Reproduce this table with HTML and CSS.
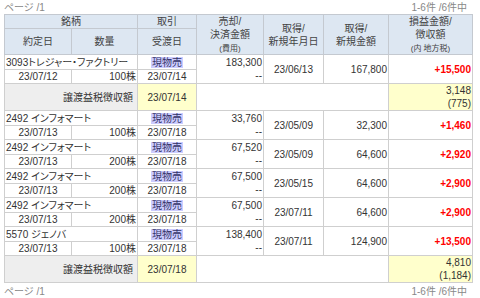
FILE: index.html
```html
<!DOCTYPE html>
<html lang="ja">
<head>
<meta charset="utf-8">
<link rel="stylesheet" href="styles.css">
</head>
<body>
<div class="page">
  <div class="pager"><span>ページ /1</span><span>1-6件 /6件中</span></div>
  <table class="list">
    <colgroup>
      <col class="c1"><col class="c2"><col class="c3"><col class="c4"><col class="c5"><col class="c6"><col class="c7">
    </colgroup>
    <thead>
      <tr class="h1">
        <th colspan="2">銘柄</th>
        <th>取引</th>
        <th rowspan="2">売却/<br>決済金額<br><span class="sm">(費用)</span></th>
        <th rowspan="2">取得/<br>新規年月日</th>
        <th rowspan="2">取得/<br>新規金額</th>
        <th rowspan="2">損益金額/<br>徴収額<br><span class="sm">(内 地方税)</span></th>
      </tr>
      <tr class="h2">
        <th>約定日</th>
        <th>数量</th>
        <th>受渡日</th>
      </tr>
    </thead>
    <tbody>
      <tr class="r1">
        <td colspan="2" class="l name">3093トレジャー・ファクトリー</td>
        <td class="c"><span class="trade">現物売</span></td>
        <td rowspan="2" class="r">183,300<br>--</td>
        <td rowspan="2" class="c">23/06/13</td>
        <td rowspan="2" class="r">167,800</td>
        <td rowspan="2" class="r pl">+15,500</td>
      </tr>
      <tr class="r2">
        <td class="c">23/07/12</td>
        <td class="r">100株</td>
        <td class="c">23/07/14</td>
      </tr>
      <tr class="tax">
        <td colspan="2" class="r taxlabel">譲渡益税徴収額</td>
        <td class="c yellow">23/07/14</td>
        <td colspan="3"></td>
        <td class="r yellow">3,148<br>(775)</td>
      </tr>

      <tr class="r1">
        <td colspan="2" class="l name">2492 インフォマート</td>
        <td class="c"><span class="trade">現物売</span></td>
        <td rowspan="2" class="r">33,760<br>--</td>
        <td rowspan="2" class="c">23/05/09</td>
        <td rowspan="2" class="r">32,300</td>
        <td rowspan="2" class="r pl">+1,460</td>
      </tr>
      <tr class="r2">
        <td class="c">23/07/13</td>
        <td class="r">100株</td>
        <td class="c">23/07/18</td>
      </tr>

      <tr class="r1">
        <td colspan="2" class="l name">2492 インフォマート</td>
        <td class="c"><span class="trade">現物売</span></td>
        <td rowspan="2" class="r">67,520<br>--</td>
        <td rowspan="2" class="c">23/05/09</td>
        <td rowspan="2" class="r">64,600</td>
        <td rowspan="2" class="r pl">+2,920</td>
      </tr>
      <tr class="r2">
        <td class="c">23/07/13</td>
        <td class="r">200株</td>
        <td class="c">23/07/18</td>
      </tr>

      <tr class="r1">
        <td colspan="2" class="l name">2492 インフォマート</td>
        <td class="c"><span class="trade">現物売</span></td>
        <td rowspan="2" class="r">67,500<br>--</td>
        <td rowspan="2" class="c">23/05/15</td>
        <td rowspan="2" class="r">64,600</td>
        <td rowspan="2" class="r pl">+2,900</td>
      </tr>
      <tr class="r2">
        <td class="c">23/07/13</td>
        <td class="r">200株</td>
        <td class="c">23/07/18</td>
      </tr>

      <tr class="r1">
        <td colspan="2" class="l name">2492 インフォマート</td>
        <td class="c"><span class="trade">現物売</span></td>
        <td rowspan="2" class="r">67,500<br>--</td>
        <td rowspan="2" class="c">23/07/11</td>
        <td rowspan="2" class="r">64,600</td>
        <td rowspan="2" class="r pl">+2,900</td>
      </tr>
      <tr class="r2">
        <td class="c">23/07/13</td>
        <td class="r">200株</td>
        <td class="c">23/07/18</td>
      </tr>

      <tr class="r1">
        <td colspan="2" class="l name">5570 ジェノバ</td>
        <td class="c"><span class="trade">現物売</span></td>
        <td rowspan="2" class="r">138,400<br>--</td>
        <td rowspan="2" class="c">23/07/11</td>
        <td rowspan="2" class="r">124,900</td>
        <td rowspan="2" class="r pl">+13,500</td>
      </tr>
      <tr class="r2">
        <td class="c">23/07/13</td>
        <td class="r">100株</td>
        <td class="c">23/07/18</td>
      </tr>
      <tr class="tax">
        <td colspan="2" class="r taxlabel">譲渡益税徴収額</td>
        <td class="c yellow">23/07/18</td>
        <td colspan="3"></td>
        <td class="r yellow">4,810<br>(1,184)</td>
      </tr>
    </tbody>
  </table>
  <div class="pager bottom"><span>ページ /1</span><span>1-6件 /6件中</span></div>
</div>
</body>
</html>
```

FILE: styles.css
```css
html, body {
  margin: 0;
  padding: 0;
  background: #ffffff;
}
body {
  font-family: "Liberation Sans", "Noto Sans CJK JP", sans-serif;
  font-size: 10px;
  color: #333333;
  font-feature-settings: "palt";
}
.page {
  width: 468px;
  padding: 2px 4px 0 4px;
}
.pager {
  display: flex;
  justify-content: space-between;
  height: 12px;
  line-height: 12px;
  color: #888888;
  padding-right: 5px;
}
.pager.bottom {
  margin-top: 3px;
}
.list {
  width: 468px;
  border-collapse: collapse;
  table-layout: fixed;
}
.c1 { width: 67px; }
.c2 { width: 66px; }
.c3 { width: 59px; }
.c4 { width: 67px; }
.c5 { width: 60px; }
.c6 { width: 65px; }
.c7 { width: 84px; }
.list th,
.list td {
  border: 1px solid #cfcfcf;
  padding: 0 1px;
  line-height: 13px;
  white-space: nowrap;
}
.list th {
  background: #dde7f2;
  font-weight: normal;
  color: #444444;
  text-align: center;
  vertical-align: middle;
  border-color: #c4c9d0;
}
.list .h1 { height: 14px; }
.list .h2 { height: 25px; }
.list .sm {
  font-size: 8px;
  line-height: 10px;
}
.list .r1 { height: 15px; }
.list .r2 { height: 14px; }
.list .tax { height: 27px; }
.list td.l { text-align: left; }
.list td.c { text-align: center; }
.list td.r { text-align: right; }
.list td.name {
  overflow: hidden;
}
.list td.pl {
  color: #ff0000;
  font-weight: bold;
}
.trade {
  background: #ccccff;
  padding: 0 1px;
  color: #333366;
}
.list td.taxlabel {
  background: #eeeeee;
  padding-right: 4px;
}
.list td.yellow {
  background: #ffffcc;
}
```
